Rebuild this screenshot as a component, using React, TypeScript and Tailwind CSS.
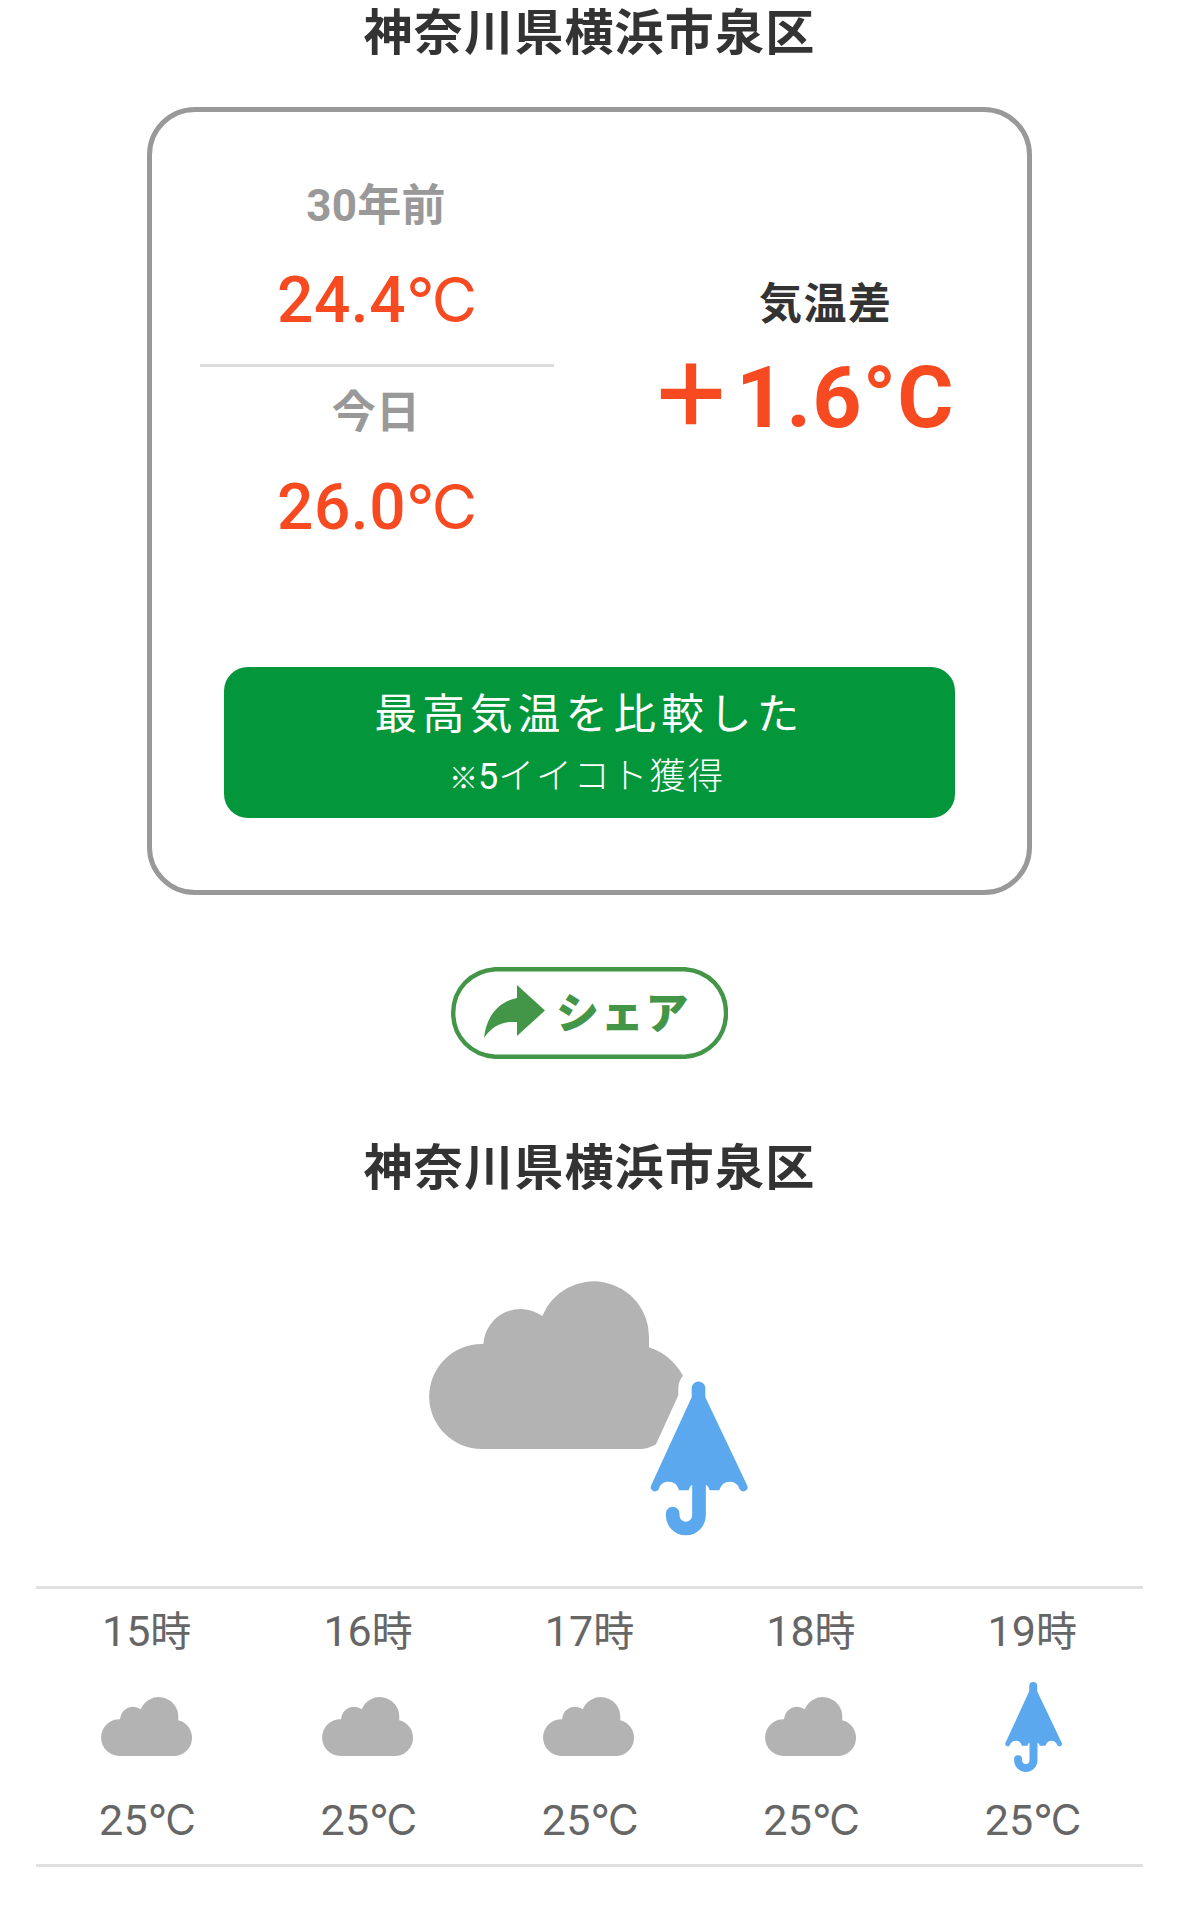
const hours = [
  { time: '15', weather: 'cloud', temp: '25' },
  { time: '16', weather: 'cloud', temp: '25' },
  { time: '17', weather: 'cloud', temp: '25' },
  { time: '18', weather: 'cloud', temp: '25' },
  { time: '19', weather: 'rain', temp: '25' },
]

function Cloud() {
  return (
    <svg className="mb-[2px] h-[59px] w-[92px]" viewBox="58 63 784 504" fill="#b3b3b3">
      <path d="M215 567A157 157 0 0 1 215 252H220A112 112 0 0 1 397 168A166 166 0 0 1 717 232V262A155 155 0 0 1 690 567Z" />
    </svg>
  )
}

function UmbrellaShape() {
  return (
    <g>
      <path
        fill="#5ba8ee"
        d="M845 385a20.500 20.500 0 0 1 41 0V412L1011 675A12 12 0 0 1 989 688C984 673 974 665 959 665S934 673 928 691H899C896 682 893 676 887 674H847C841 676 839 682 836 691H807C802 673 792 665 776 665S750 673 746 688A12 12 0 0 1 724 675L845 412Z"
      />
      <path d="M788 761v5a39.500 39.500 0 0 0 79 0V670" fill="none" stroke="#5ba8ee" strokeWidth="41" strokeLinecap="round" />
    </g>
  )
}

function Umbrella() {
  return (
    <svg className="ml-[2px] h-[90px] w-[57px]" viewBox="722 364 290 462">
      <UmbrellaShape />
    </svg>
  )
}

function CloudThenRain() {
  return (
    <svg className="h-[290px] w-[360px]" viewBox="0 0 1080 870">
      <path
        fill="#b3b3b3"
        d="M215 567A157 157 0 0 1 215 252H220A112 112 0 0 1 397 168A166 166 0 0 1 717 232V262Q782 283 819 347Q805 362 805 385V406L738 553Q715 567 690 567Z"
      />
      <UmbrellaShape />
    </svg>
  )
}

function ShareButton() {
  return (
    <button className="relative flex h-[92px] w-[277px] items-center">
      <svg className="absolute inset-0 h-[92px] w-[277px]" viewBox="0 0 277 92" fill="none">
        <path d="M44 2.200H234C258 4 275 22 275 46S258 88 234 89.800H44C20 88 2.200 70 2.200 46S20 4 44 2.200Z" stroke="#439548" strokeWidth="4.400" />
        <path d="M66 18L94 43.500L66 69V55C52 54 41 59 33 71C35 51 46 35 66 31Z" fill="#439548" />
      </svg>
      <span className="mt-[2px] ml-[105px] text-[43px] leading-[84px] font-black tracking-[1.800px] text-[#439548]">シェア</span>
    </button>
  )
}

function Place() {
  return <h2 className="h-[65px] text-center text-[49px] leading-[67px] font-bold tracking-[1.200px] text-[#333]">神奈川県横浜市泉区</h2>
}

function Temperature({ label, value }: { label: string; value: string }) {
  return (
    <div className="text-center">
      <div className="h-[60px] pr-[2px] text-[44px] leading-[62px] font-bold tracking-[0.300px] text-[#999]">{label}</div>
      <div className="h-[129px] pr-[2px] text-[64px] leading-[131px] font-medium tracking-[0.600px] text-[#f74a20]">
        {value}
        <span className="font-['Inter'] text-[62px] leading-none font-normal tracking-[-2px]">°C</span>
      </div>
    </div>
  )
}

export default function App() {
  return (
    <div className="h-[1927px] w-[1179px] overflow-hidden bg-white font-['Roboto','Noto_Sans_CJK_JP',sans-serif]">
      <Place />
      <div className="mx-[147px] mt-[42px] h-[788px] rounded-[48px] border-[5px] border-[#999]">
        <div className="flex h-[555px] pt-[63px] pl-12">
          <div className="w-[354px]">
            <Temperature label="30年前" value="24.4" />
            <div className="mb-[15px] h-[3px] bg-[#ddd]" />
            <Temperature label="今日" value="26.0" />
          </div>
          <div className="ml-[94px] w-[360px] pt-[99px]">
            <div className="pl-[111px] text-[43px] leading-[61px] font-bold tracking-[1.500px] text-[#333]">気温差</div>
            <div className="flex text-[86px] leading-[126px] font-bold whitespace-nowrap text-[#f74a20]">
              <span className="w-[88px] font-black">{'\uFF0B'}</span>
              <span className="tracking-[1px]">1.6°C</span>
            </div>
          </div>
        </div>
        <button className="mx-[72px] flex h-[151px] w-[731px] flex-col items-center justify-start rounded-3xl bg-[#03963a] pt-[15px] text-white">
          <div className="h-16 text-[42.500px] leading-[65px] tracking-[5.300px]">最高気温を比較した</div>
          <div className="h-[62px] pr-[5px] text-[36px] leading-[62px]">
            <span className="text-[29px] leading-none font-bold">※</span>5
            <span className="font-light tracking-[1.800px]">イイコト獲得</span>
          </div>
        </button>
      </div>
      <div className="mt-[72px] flex justify-center">
        <ShareButton />
      </div>
      <div className="mt-[76px]">
        <Place />
      </div>
      <div className="mt-[60px] flex justify-center">
        <CloudThenRain />
      </div>
      <div className="mx-9 mt-9 grid grid-cols-5 border-y-[3px] border-[#e0e0e0] pt-3 pb-[14px] text-[43px] leading-[60px] text-[#666]">
        {hours.map((hour) => (
          <div key={hour.time} className="flex flex-col items-center">
            <div className="h-[60px]">
              {hour.time}
              <span className="text-[41px] leading-none">時</span>
            </div>
            <div className="mt-[21px] flex h-[90px] items-center">{hour.weather === 'cloud' ? <Cloud /> : <Umbrella />}</div>
            <div className="mt-[18px] h-[60px] tracking-[0.300px]">
              {hour.temp}
              <span className="font-['Inter'] text-[42px] leading-none tracking-[-1.500px]">°C</span>
            </div>
          </div>
        ))}
      </div>
    </div>
  )
}
